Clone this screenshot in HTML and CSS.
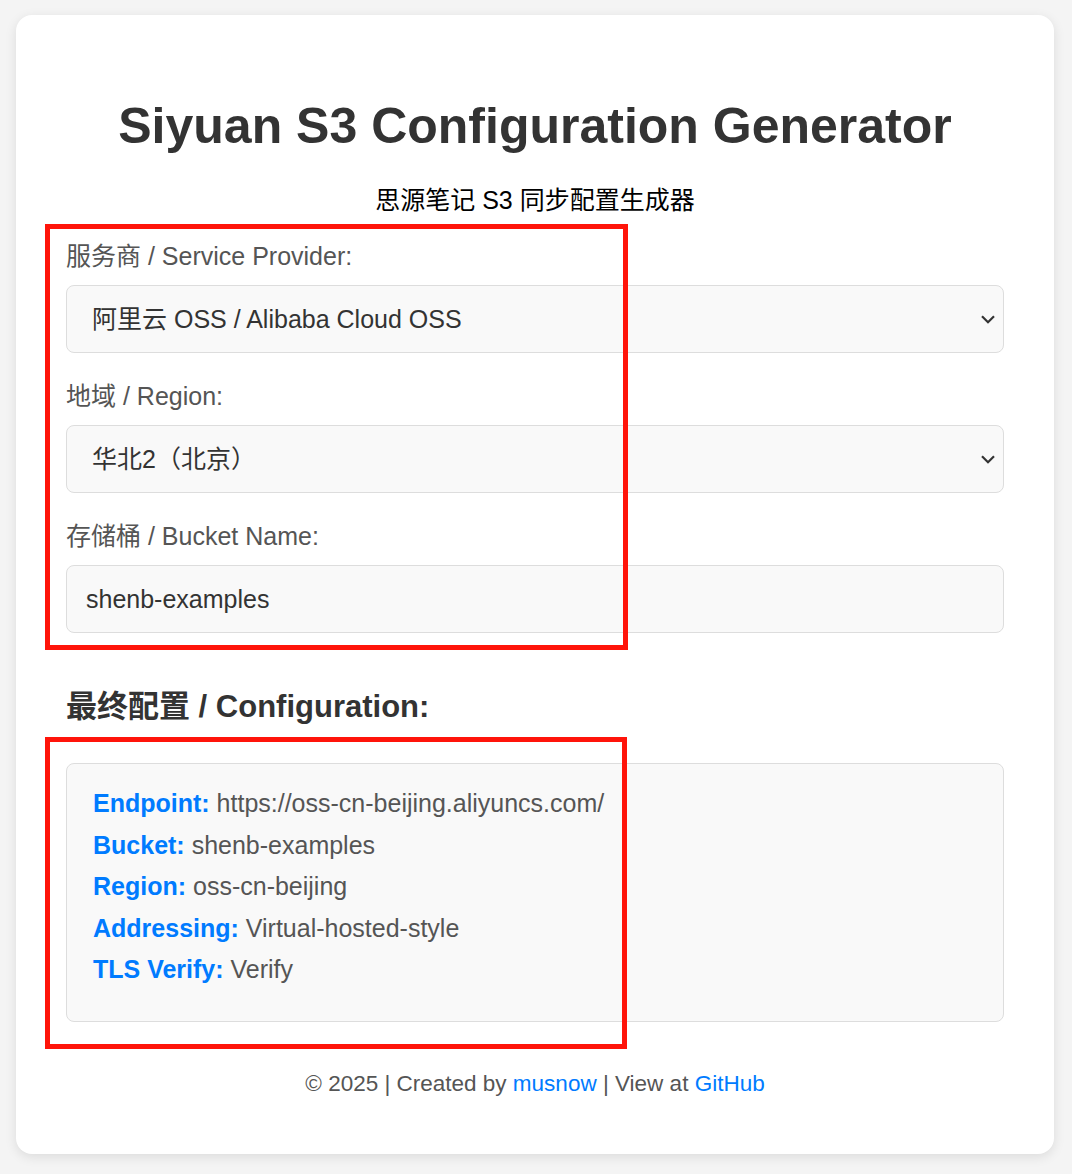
FILE: index.html
```html
<!DOCTYPE html>
<html lang="zh-CN">
<head>
<meta charset="utf-8">
<title>Siyuan S3 Configuration Generator</title>
<link rel="stylesheet" href="styles.css">
</head>
<body>
<div class="card">
  <h1 class="title">Siyuan S3 Configuration Generator</h1>
  <p class="subtitle">思源笔记 S3 同步配置生成器</p>

  <div class="group">
    <label class="label" for="provider">服务商 / Service Provider:</label>
    <div class="select-wrap">
      <select id="provider" class="field select">
        <option>阿里云 OSS / Alibaba Cloud OSS</option>
      </select>
      <svg class="chevron" width="14" height="9" viewBox="0 0 14 9"><path d="M1 1.2 L7 7.2 L13 1.2" fill="none" stroke="#333" stroke-width="2.2"/></svg>
    </div>
  </div>

  <div class="group">
    <label class="label" for="region">地域 / Region:</label>
    <div class="select-wrap">
      <select id="region" class="field select">
        <option>华北2（北京）</option>
      </select>
      <svg class="chevron" width="14" height="9" viewBox="0 0 14 9"><path d="M1 1.2 L7 7.2 L13 1.2" fill="none" stroke="#333" stroke-width="2.2"/></svg>
    </div>
  </div>

  <div class="group">
    <label class="label" for="bucket">存储桶 / Bucket Name:</label>
    <input id="bucket" class="field input" type="text" value="shenb-examples">
  </div>

  <h3 class="config-title">最终配置 / Configuration:</h3>
  <div class="config">
    <div class="line"><strong class="key">Endpoint:</strong> https://oss-cn-beijing.aliyuncs.com/</div>
    <div class="line"><strong class="key">Bucket:</strong> shenb-examples</div>
    <div class="line"><strong class="key">Region:</strong> oss-cn-beijing</div>
    <div class="line"><strong class="key">Addressing:</strong> Virtual-hosted-style</div>
    <div class="line"><strong class="key">TLS Verify:</strong> Verify</div>
  </div>

  <footer class="footer">© 2025 | Created by <a href="#">musnow</a> | View at <a href="#">GitHub</a></footer>

  <div class="mark mark-form"></div>
  <div class="mark mark-config"></div>
</div>
</body>
</html>
```

FILE: styles.css
```css
html, body {
  margin: 0;
  background: #f4f4f4;
}

body {
  padding: 15px 18px 20px 16px;
  font-family: "Liberation Sans", "Noto Sans CJK SC", Arial, sans-serif;
  font-size: 25px;
  color: #333;
}

.card {
  position: relative;
  background: #fff;
  border-radius: 16px;
  box-shadow: 0 3px 12px rgba(0, 0, 0, 0.1);
  padding: 50px 50px 57px;
}

.title {
  margin: 32px 0 0;
  font-size: 50px;
  line-height: 58px;
  font-weight: bold;
  text-align: center;
  color: #333;
}

.subtitle {
  margin: 30px 0 0;
  line-height: 30px;
  text-align: center;
  color: #000;
}

.group {
  margin-top: 26px;
}

.group + .group {
  margin-top: 28px;
}

.label {
  display: block;
  line-height: 30px;
  color: #555;
  margin-bottom: 14px;
}

.select-wrap {
  position: relative;
}

.field {
  display: block;
  box-sizing: border-box;
  width: 100%;
  height: 68px;
  margin: 0;
  border: 1px solid #ddd;
  border-radius: 8px;
  background: #f9f9f9;
  font-family: "Liberation Sans", "Noto Sans CJK SC", Arial, sans-serif;
  font-size: 25px;
  color: #333;
  outline: none;
}

.select {
  appearance: none;
  -webkit-appearance: none;
  padding: 0 40px 0 25px;
}

.input {
  padding: 0 19px;
}

.chevron {
  position: absolute;
  top: 30px;
  right: 9px;
}

.config-title {
  margin: 56px 0 0;
  font-size: 31px;
  line-height: 36px;
  font-weight: bold;
  color: #333;
}

.config {
  margin-top: 38px;
  border: 1px solid #ddd;
  border-radius: 8px;
  background: #f9f9f9;
  padding: 19px 26px 30px;
}

.line {
  line-height: 41.5px;
  color: #555;
}

.key {
  color: #007bff;
  font-weight: bold;
}

.footer {
  margin: 49px 0 0;
  font-size: 22.5px;
  line-height: 26px;
  text-align: center;
  color: #555;
}

.footer a {
  color: #007bff;
  text-decoration: none;
}

.mark {
  position: absolute;
  box-sizing: border-box;
  border: 5px solid #ff140a;
  pointer-events: none;
}

.mark-form {
  left: 29px;
  top: 209px;
  width: 583px;
  height: 426px;
}

.mark-config {
  left: 29px;
  top: 722px;
  width: 582px;
  height: 312px;
}
```
